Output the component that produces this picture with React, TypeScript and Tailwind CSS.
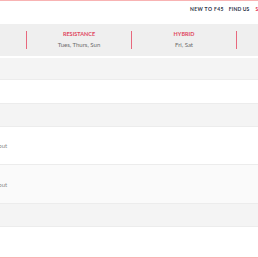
import React from 'react';

const days = [
  { name: 'RESISTANCE', when: 'Tues, Thurs, Sun' },
  { name: 'HYBRID', when: 'Fri, Sat' },
  { name: 'CARDIO', when: 'Mon, Wed' },
];

function Row({ bg, h, label, border }: { bg: string; h: string; label?: string; border?: boolean }) {
  return (
    <div className={`${bg} ${h} ${border ? 'border-t border-[#ececec]' : ''} flex items-center`}>
      {label && (
        <span className="-ml-[16px] text-[6px] text-[#8a8a8a] whitespace-nowrap">{label}</span>
      )}
    </div>
  );
}

export default function App() {
  return (
    <div className="w-[258px] h-[258px] overflow-hidden bg-white font-['Lato','Open_Sans',sans-serif]">
      <div className="h-px bg-[#f8b3b3]" />

      <div className="h-[23px] flex items-start pt-[5px] pl-[190px] whitespace-nowrap">
        <span className="text-[5px] font-bold tracking-[0.08em] text-[#2a2f45]">NEW TO F45</span>
        <span className="ml-[5px] text-[5px] font-bold tracking-[0.03em] text-[#2a2f45]">FIND US</span>
        <span className="ml-[6px] text-[5px] font-bold text-[#e0324b]">SIGN</span>
      </div>

      <div className="h-[32px] bg-[#efefef] flex items-center -ml-[79px]">
        <div className="w-[105px] shrink-0" />
        {days.map((d) => (
          <div
            key={d.name}
            className="w-[105px] h-[18px] shrink-0 border-l border-[#e8687d] flex flex-col items-center justify-center gap-[4px]"
          >
            <span className="text-[5.5px] font-bold text-[#e0475f] leading-none">{d.name}</span>
            <span className="text-[6px] text-[#6b6b6b] leading-none">{d.when}</span>
          </div>
        ))}
      </div>

      <div className="h-[2px] bg-white" />
      <Row bg="bg-[#f4f4f4]" h="h-[21px]" />
      <Row bg="bg-white" h="h-[24px]" border />
      <Row bg="bg-[#f4f4f4]" h="h-[23px]" border />
      <Row bg="bg-white" h="h-[38px]" label="Workout" border />
      <Row bg="bg-[#fafafa]" h="h-[39px]" label="Workout" border />
      <Row bg="bg-[#f4f4f4]" h="h-[23px]" border />
      <Row bg="bg-white" h="h-[31px]" border />
      <div className="h-[2px] bg-[#f8b3b3]" />
    </div>
  );
}
